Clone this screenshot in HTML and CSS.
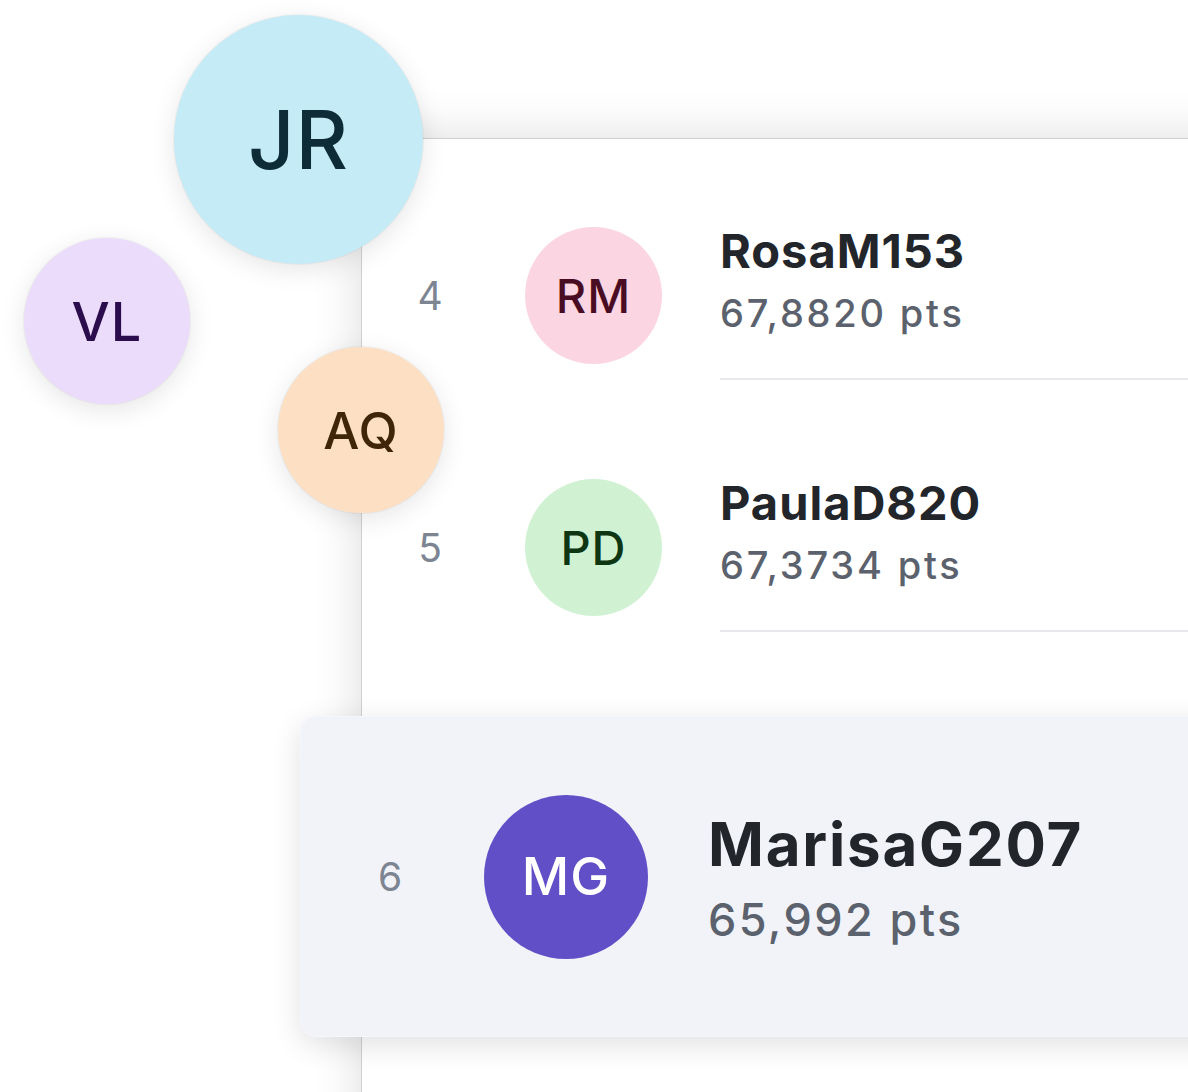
FILE: index.html
```html
<!DOCTYPE html>
<html lang="en">
<head>
<meta charset="utf-8">
<title>Leaderboard</title>
<link rel="stylesheet" href="styles.css">
</head>
<body>
<div class="stage">
  <div class="panel">
    <div class="row">
      <div class="rank">4</div>
      <div class="avatar av-rm">RM</div>
      <div class="info">
        <div class="name">RosaM153</div>
        <div class="pts">67,8820 pts</div>
      </div>
    </div>
    <div class="row">
      <div class="rank">5</div>
      <div class="avatar av-pd">PD</div>
      <div class="info">
        <div class="name">PaulaD820</div>
        <div class="pts">67,3734 pts</div>
      </div>
    </div>
    <div class="card">
      <div class="card-rank">6</div>
      <div class="card-avatar">MG</div>
      <div class="card-info">
        <div class="card-name">MarisaG207</div>
        <div class="card-pts">65,992 pts</div>
      </div>
    </div>
  </div>

  <div class="bubble bubble-jr">JR</div>
  <div class="bubble bubble-vl">VL</div>
  <div class="bubble bubble-aq">AQ</div>
</div>
</body>
</html>
```

FILE: styles.css
```css
html, body {
  margin: 0;
  padding: 0;
  background: #ffffff;
}

body {
  font-family: "Inter", "Noto Sans", sans-serif;
}

.stage {
  position: relative;
  width: 1188px;
  height: 1092px;
  overflow: hidden;
  padding: 138px 0 0 361px;
  box-sizing: border-box;
}

.panel {
  width: 900px;
  height: 1000px;
  background: #ffffff;
  border-top: 1px solid #d0d0d0;
  border-left: 1px solid #d0d0d0;
  box-shadow: 0 0 46px rgba(0, 0, 0, 0.14);
  padding-top: 88px;
  box-sizing: border-box;
}

.row {
  display: flex;
  align-items: flex-start;
  margin-bottom: 99px;
}

.rank {
  width: 136px;
  height: 137px;
  line-height: 137px;
  text-align: center;
  font-size: 39px;
  font-weight: 400;
  color: #7d8593;
}

.avatar {
  flex: none;
  width: 137px;
  height: 137px;
  margin-left: 27px;
  border-radius: 50%;
  display: flex;
  align-items: center;
  justify-content: center;
  font-size: 47px;
  font-weight: 500;
  letter-spacing: 1px;
}

.av-rm {
  background: #fbd5e2;
  color: #4a0c23;
}

.av-pd {
  background: #d0f2d3;
  color: #0e3613;
}

.info {
  flex: 1;
  height: 151px;
  margin-left: 58px;
  border-bottom: 2px solid #e6e8eb;
}

.name {
  font-size: 47px;
  line-height: 48px;
  font-weight: 700;
  letter-spacing: 1px;
  color: #22262b;
}

.pts {
  margin-top: 16px;
  font-size: 38px;
  line-height: 45px;
  font-weight: 500;
  letter-spacing: 2.8px;
  color: #5b626d;
}

.card {
  display: flex;
  align-items: center;
  margin-left: -62px;
  margin-top: -15px;
  width: 1000px;
  height: 321px;
  background: #f1f3f9;
  border-radius: 16px;
  border: 1px solid #f6f7fb;
  box-sizing: border-box;
  box-shadow: 0 8px 30px rgba(0, 0, 0, 0.12);
}

.card-rank {
  width: 178px;
  line-height: 44px;
  text-align: center;
  font-size: 39px;
  font-weight: 400;
  color: #7d8593;
}

.card-avatar {
  flex: none;
  width: 164px;
  height: 164px;
  margin-left: 5px;
  border-radius: 50%;
  background: #614fc7;
  color: #ffffff;
  display: flex;
  align-items: center;
  justify-content: center;
  font-size: 52px;
  font-weight: 500;
  letter-spacing: 1px;
}

.card-info {
  margin-left: 60px;
  padding-top: 6px;
}

.card-name {
  font-size: 60px;
  line-height: 60px;
  font-weight: 700;
  letter-spacing: 1.8px;
  color: #22262b;
}

.card-pts {
  margin-top: 21px;
  font-size: 45px;
  line-height: 50px;
  font-weight: 500;
  letter-spacing: 2.4px;
  color: #5b626d;
}

.bubble {
  position: absolute;
  border-radius: 50%;
  display: flex;
  align-items: center;
  justify-content: center;
  font-weight: 500;
  box-shadow: 0 6px 26px rgba(0, 0, 0, 0.10), 0 0 0 1px rgba(0, 0, 0, 0.04);
}

.bubble-jr {
  left: 174px;
  top: 15px;
  width: 249px;
  height: 249px;
  background: #c5ebf7;
  color: #0e2b38;
  font-size: 81px;
  letter-spacing: 1px;
}

.bubble-vl {
  left: 24px;
  top: 238px;
  width: 166px;
  height: 166px;
  background: #ecdcfc;
  color: #2b0d4d;
  font-size: 54px;
  letter-spacing: 1px;
}

.bubble-aq {
  left: 278px;
  top: 347px;
  width: 166px;
  height: 166px;
  background: #fde0c3;
  color: #3f2608;
  font-size: 51px;
  letter-spacing: 1px;
}
```
